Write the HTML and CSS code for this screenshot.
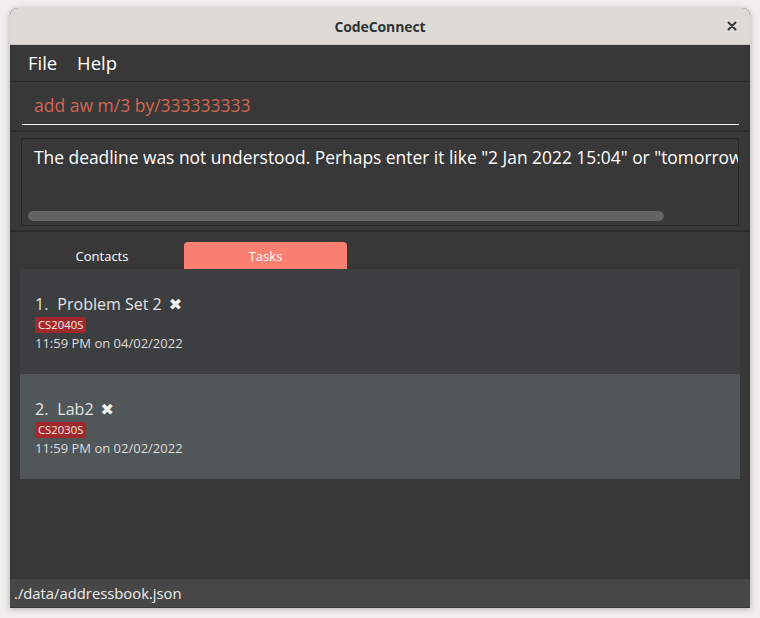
FILE: index.html
```html
<!DOCTYPE html>
<html lang="en">
<head>
<meta charset="utf-8">
<title>CodeConnect</title>
<link rel="stylesheet" href="styles.css">
</head>
<body>
<div class="window">
  <header class="titlebar">
    <span></span>
    <span class="title">CodeConnect</span>
    <span class="close">
      <svg width="10" height="10" viewBox="0 0 10 10"><path d="M1.5 1.5 L8.5 8.5 M8.5 1.5 L1.5 8.5" stroke="#2e3436" stroke-width="1.9" stroke-linecap="round"/></svg>
    </span>
  </header>
  <nav class="menubar">
    <span class="menu-item">File</span>
    <span class="menu-item">Help</span>
  </nav>
  <section class="command">
    <div class="cmd-input">add aw m/3 by/333333333</div>
  </section>
  <section class="result">
    <div class="result-box">
      <div class="result-text">The deadline was not understood. Perhaps enter it like "2 Jan 2022 15:04" or "tomorrow 9pm".</div>
      <div class="scrollbar"></div>
    </div>
  </section>
  <main class="main">
    <div class="tabs">
      <div class="tab">Contacts</div>
      <div class="tab tab-active">Tasks</div>
    </div>
    <div class="list">
      <div class="card card-even">
        <div class="card-title"><span class="idx">1.</span><span>Problem Set 2</span><span class="mark">✖</span></div>
        <div class="tags"><span class="tag">CS2040S</span></div>
        <div class="deadline">11:59 PM on 04/02/2022</div>
      </div>
      <div class="card card-odd">
        <div class="card-title"><span class="idx">2.</span><span>Lab2</span><span class="mark">✖</span></div>
        <div class="tags"><span class="tag">CS2030S</span></div>
        <div class="deadline">11:59 PM on 02/02/2022</div>
      </div>
    </div>
  </main>
  <footer class="status">./data/addressbook.json</footer>
</div>
</body>
</html>
```
FILE: styles.css
```css
* { box-sizing: border-box; }
html, body { margin: 0; padding: 0; }
body {
  background: #f0efee;
  font-family: "Open Sans", "Noto Sans", sans-serif;
  width: 760px;
  height: 618px;
  overflow: hidden;
}
.window {
  margin: 8px 10px 0;
  width: 740px;
  height: 600px;
  display: flex;
  flex-direction: column;
  background: #383838;
  border-radius: 8px 8px 0 0;
  overflow: hidden;
  box-shadow: 0 1px 6px rgba(0,0,0,0.28);
}
.titlebar {
  height: 37px;
  flex: none;
  background: #dedbd7;
  display: grid;
  grid-template-columns: 1fr auto 1fr;
  align-items: center;
  border-bottom: 1px solid #c9c5c0;
}
.title {
  font-size: 14px;
  font-weight: 700;
  color: #2e3436;
  letter-spacing: -0.1px;
}
.close {
  justify-self: end;
  margin-right: 13px;
  display: flex;
}
.menubar {
  height: 37px;
  flex: none;
  display: flex;
  align-items: center;
  padding-left: 8px;
  border-bottom: 1px solid #2b2b2b;
}
.menu-item {
  font-size: 18.4px;
  color: #ffffff;
  padding: 0 10px;
  line-height: 24px;
}
.command {
  flex: none;
  padding: 11px 11px 5px 12px;
  border-bottom: 2px solid #2d2d2d;
}
.cmd-input {
  font-size: 17.5px;
  line-height: 25px;
  color: #d06651;
  padding: 0 0 6px 12px;
  border-bottom: 1px solid #f2f2f2;
}
.result {
  flex: none;
  padding: 6px 11px 4px 11px;
  border-bottom: 2px solid #2d2d2d;
}
.result-box {
  height: 88px;
  border: 1px solid #262626;
  display: flex;
  flex-direction: column;
}
.result-text {
  flex: 1;
  padding: 7px 0 0 12px;
  font-size: 17.4px;
  line-height: 23px;
  color: #ffffff;
  white-space: nowrap;
  overflow: hidden;
}
.scrollbar {
  flex: none;
  width: 636px;
  height: 10px;
  margin: 0 0 4px 6px;
  border-radius: 5px;
  background: #646464;
}
.main {
  flex: 1;
  padding: 10px 10px 0;
  display: flex;
  flex-direction: column;
}
.tabs {
  display: flex;
  height: 27px;
}
.tab {
  width: 164px;
  font-size: 13px;
  color: #ffffff;
  display: flex;
  align-items: center;
  justify-content: center;
  padding-top: 1px;
}
.tab-active {
  width: 163px;
  background: #fa8072;
  border-radius: 4px 4px 0 0;
}
.list {
  display: flex;
  flex-direction: column;
}
.card {
  height: 105px;
  padding: 24px 15px 0;
}
.card-even { background: #3c3e40; }
.card-odd { background: #515658; }
.card-title {
  display: flex;
  align-items: baseline;
  font-size: 16px;
  line-height: 22px;
  color: #e4e4e4;
}
.idx { margin-right: 9px; }
.mark {
  margin-left: 7px;
  font-family: "DejaVu Sans", sans-serif;
  font-size: 16px;
  color: #f2f2f2;
}
.tags {
  display: flex;
  height: 17px;
  margin-top: 1px;
}
.tag {
  background: #a2282b;
  color: #ececec;
  font-size: 11.3px;
  line-height: 16px;
  height: 16px;
  padding: 0 3px;
  border-radius: 2px;
}
.deadline {
  font-size: 13px;
  line-height: 18px;
  color: #dcdcdc;
}
.status {
  flex: none;
  height: 29px;
  background: #474747;
  color: #eeeeee;
  font-size: 14.8px;
  line-height: 28px;
  padding-left: 4px;
  border-bottom: 1px solid #3a3a3a;
}
```
